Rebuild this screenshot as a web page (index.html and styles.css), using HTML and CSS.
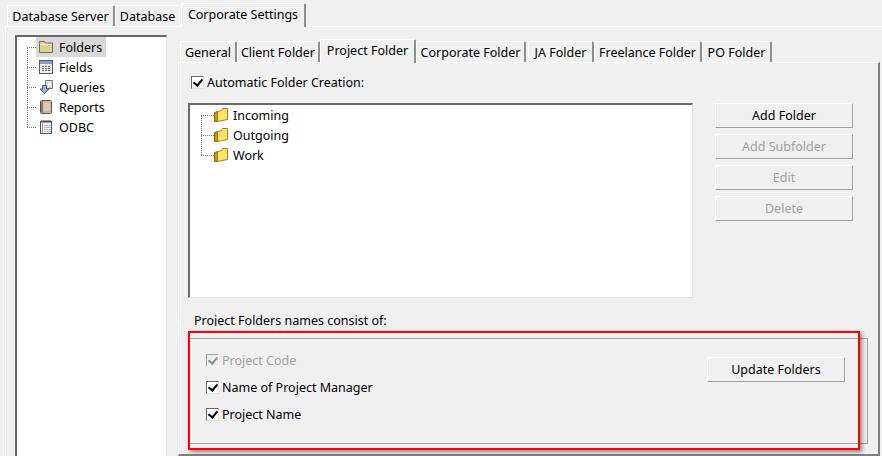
FILE: index.html
```html
<!DOCTYPE html>
<html lang="en">
<head>
<meta charset="utf-8">
<title>Corporate Settings</title>
<link rel="stylesheet" href="styles.css">
</head>
<body>
<div class="window">
  <div class="tabs outer-tabs">
    <div class="tab t-server">Database Server</div>
    <div class="tab t-db">Database</div>
    <div class="tab active t-corp">Corporate Settings</div>
  </div>
  <div class="outer-panel">
    <ul class="side-tree">
      <li class="node selected">
        <svg class="ico" viewBox="0 0 14 14"><path d="M.5 1.500h5l1 1.500h7v9.500H.5z" fill="#d6d28f" stroke="#6f6f58"/><path d="M1 4.500h12" stroke="#f4f1cf"/></svg>
        <span>Folders</span>
      </li>
      <li class="node">
        <svg class="ico" viewBox="0 0 14 14"><rect x=".5" y=".5" width="13" height="13" fill="#ececec" stroke="#555b66"/><rect x="1" y="1" width="12" height="3" fill="#8d9ccb"/><path d="M3 6h2v1H3zM6 6h2v1H6zM9 6h2v1H9zM3 8h2v1H3zM6 8h2v1H6zM9 8h2v1H9zM3 10h2v1H3zM6 10h2v1H6zM9 10h2v1H9z" fill="#6a6a6a"/></svg>
        <span>Fields</span>
      </li>
      <li class="node">
        <svg class="ico" viewBox="0 0 14 14"><path d="M6.500.5h7v8h-7z" fill="#dcdcdc" stroke="#7a7a7a"/><path d="M9 2.500h3v3H9z" fill="#f4f4f4"/><path d="M3.500 5.500h4v3.500h2.500l-4.500 4.500L1 9h2.500z" fill="#9db3d2" stroke="#4c5566"/></svg>
        <span>Queries</span>
      </li>
      <li class="node">
        <svg class="ico" viewBox="0 0 14 14"><rect x="1.500" y=".5" width="11" height="13" rx="1" fill="#cdb9a8" stroke="#5f554e"/><path d="M3.500 1v12" stroke="#8d7d70"/><path d="M1 3h2M1 5h2M1 7h2M1 9h2M1 11h2" stroke="#3f3a36"/><rect x="5" y="3" width="6" height="8" fill="#d9c8b8"/></svg>
        <span>Reports</span>
      </li>
      <li class="node">
        <svg class="ico" viewBox="0 0 14 14"><rect x="1.500" y="1.500" width="11" height="12" fill="#fdfbf6" stroke="#555"/><path d="M3 0v3M5 0v3M7 0v3M9 0v3M11 0v3" stroke="#444"/><path d="M5 5.500h7M5 7.500h7M5 9.500h7M5 11.500h7" stroke="#9cc0e8"/><path d="M3.500 3v10" stroke="#e8765c"/></svg>
        <span>ODBC</span>
      </li>
    </ul>
    <div class="content">
      <div class="tabs inner-tabs">
        <div class="tab i-general">General</div>
        <div class="tab i-client">Client Folder</div>
        <div class="tab active i-project">Project Folder</div>
        <div class="tab i-corp">Corporate Folder</div>
        <div class="tab i-ja">JA Folder</div>
        <div class="tab i-free">Freelance Folder</div>
        <div class="tab i-po">PO Folder</div>
      </div>
      <div class="inner-panel">
        <label class="check auto"><span class="box on"></span><span>Automatic Folder Creation:</span></label>
        <div class="list-row">
          <ul class="folder-tree">
            <li class="fnode"><svg class="fico" viewBox="0 0 14 14"><path d="M.5 4.500l3.500-1v10l-3.500 0z" fill="#c89410" stroke="#8a6a10"/><path d="M3.500 3.500l4-1 1-2h5v11l-10 2z" fill="#fbe36a" stroke="#a87f14"/></svg><span>Incoming</span></li>
            <li class="fnode"><svg class="fico" viewBox="0 0 14 14"><path d="M.5 4.500l3.500-1v10l-3.500 0z" fill="#c89410" stroke="#8a6a10"/><path d="M3.500 3.500l4-1 1-2h5v11l-10 2z" fill="#fbe36a" stroke="#a87f14"/></svg><span>Outgoing</span></li>
            <li class="fnode"><svg class="fico" viewBox="0 0 14 14"><path d="M.5 4.500l3.500-1v10l-3.500 0z" fill="#c89410" stroke="#8a6a10"/><path d="M3.500 3.500l4-1 1-2h5v11l-10 2z" fill="#fbe36a" stroke="#a87f14"/></svg><span>Work</span></li>
          </ul>
          <div class="btn-col">
            <button class="btn">Add Folder</button>
            <button class="btn" disabled>Add Subfolder</button>
            <button class="btn" disabled>Edit</button>
            <button class="btn" disabled>Delete</button>
          </div>
        </div>
        <div class="group-label">Project Folders names consist of:</div>
        <div class="group">
          <div class="checks">
            <label class="check disabled"><span class="box on"></span><span>Project Code</span></label>
            <label class="check"><span class="box on"></span><span>Name of Project Manager</span></label>
            <label class="check"><span class="box on"></span><span>Project Name</span></label>
          </div>
          <button class="btn update">Update Folders</button>
        </div>
      </div>
    </div>
  </div>
  <div class="highlight"></div>
</div>
</body>
</html>
```
FILE: styles.css
```css
* { box-sizing: border-box; }
html, body { margin: 0; padding: 0; height: 456px; overflow: hidden; }
body { background: #f0f0f0; font: 12.5px/16px "Noto Sans", "Open Sans", sans-serif; color: #000; }
ul { list-style: none; margin: 0; padding: 0; }
.window { position: relative; width: 882px; height: 456px; overflow: hidden; }

.tabs { display: flex; align-items: flex-end; }
.tab { height: 21px; padding-top: 3px; text-align: center; white-space: nowrap; background: #f0f0f0;
  border-top: 1px solid #fff; border-left: 1px solid #fff; border-right: 2px solid #8e8e8e; border-top-left-radius: 2px; border-top-right-radius: 2px; }
.tab.active { position: relative; z-index: 2; height: 24px; margin-bottom: -1px; }

.outer-tabs { height: 26px; padding-left: 7px; }
.t-server { width: 108px; }
.t-db { width: 66px; border-right-color: #f0f0f0; }
.t-corp { width: 125px; }

.outer-panel { display: flex; height: 430px; margin-left: 5px; padding: 8px 0 0 9px; border-top: 1px solid #fff; border-left: 1px solid #fff; }
.side-tree { position: relative; flex: none; width: 152px; height: 430px; padding: 0 0 0 19px; background: #fff;
  border-top: 2px solid #696969; border-left: 2px solid #696969; border-right: 1px solid #e3e3e3; }
.side-tree::before { content: ""; position: absolute; left: 10px; top: 10px; height: 80px; border-left: 1px dotted #777; }
.node { position: relative; display: flex; align-items: center; gap: 6px; height: 20px; width: 70px; padding-left: 3px; }
.node::before { content: ""; position: absolute; left: -9px; top: 10px; width: 9px; border-top: 1px dotted #777; }
.node.selected { background: #d9d9d9; }
.node span, .fnode span, .check span:last-child { margin-top: 2px; }
.ico { flex: none; width: 14px; height: 14px; }

.content { flex: none; width: 702px; margin-left: 11px; }
.inner-tabs { height: 25px; margin-top: 2px; padding-left: 2px; }
.i-general { width: 57px; }
.i-client { width: 83px; }
.i-project { width: 96px; }
.i-corp { width: 110px; }
.i-ja { width: 66px; margin-left: 2px; }
.i-free { width: 108px; }
.i-po { width: 70px; }

.inner-panel { height: 394px; padding: 11px 0 0 9px; border-top: 1px solid #fff; border-left: 1px solid #fff; border-right: 2px solid #7f7f7f; border-bottom: 2px solid #7f7f7f; }

.check { display: flex; align-items: center; height: 16px; white-space: nowrap; }
.auto { margin-left: 3px; }
.box { flex: none; position: relative; width: 13px; height: 13px; margin-right: 3px; background: #fff; border-top: 1px solid #696969; border-left: 1px solid #696969; border-right: 1px solid #e3e3e3; border-bottom: 1px solid #e3e3e3; }
.box.on::after { content: ""; position: absolute; left: 3px; top: 0; width: 4px; height: 7px; border-right: 2px solid #000; border-bottom: 2px solid #000; transform: rotate(40deg); }
.disabled { color: #a0a0a0; }
.disabled .box { background: #f0f0f0; border-color: #a0a0a0 #fff #fff #a0a0a0; }
.disabled .box.on::after { border-color: #8c8c8c; }

.list-row { display: flex; margin-top: 13px; }
.folder-tree { position: relative; flex: none; width: 505px; height: 195px; padding: 0 0 0 24px; background: #fff;
  border-top: 2px solid #696969; border-left: 2px solid #696969; border-right: 1px solid #e3e3e3; border-bottom: 1px solid #e3e3e3; }
.folder-tree::before { content: ""; position: absolute; left: 11px; top: 10px; height: 40px; border-left: 1px dotted #777; }
.fnode { position: relative; display: flex; align-items: center; gap: 5px; height: 20px; }
.fnode::before { content: ""; position: absolute; left: -13px; top: 10px; width: 13px; border-top: 1px dotted #777; }
.fico { flex: none; width: 14px; height: 14px; }

.btn-col { display: flex; flex-direction: column; gap: 6px; margin-left: 22px; }
.btn { display: block; width: 138px; height: 25px; padding: 0; font: inherit; color: #000; background: #f0f0f0; border: 0; border-top: 1px solid #fff; border-left: 1px solid #fff; border-right: 1px solid #a0a0a0; border-bottom: 1px solid #a0a0a0; }
.btn:disabled { color: #a0a0a0; }

.group-label { height: 14px; margin: 14px 0 0 6px; padding-top: 1px; overflow: hidden; }
.group { display: flex; justify-content: space-between; width: 678px; height: 106px; margin: 12px 0 0 2px; padding: 13px 22px 0 15px; border: 1px solid #a0a0a0; border-left-color: #f0f0f0; }
.checks { display: flex; flex-direction: column; gap: 11px; }
.update { margin-top: 5px; }

.highlight { position: absolute; left: 188px; top: 331px; width: 672px; height: 119px; border: 2.5px solid #f00; box-shadow: 2px 2px 4px rgba(0,0,0,.45); }
```
